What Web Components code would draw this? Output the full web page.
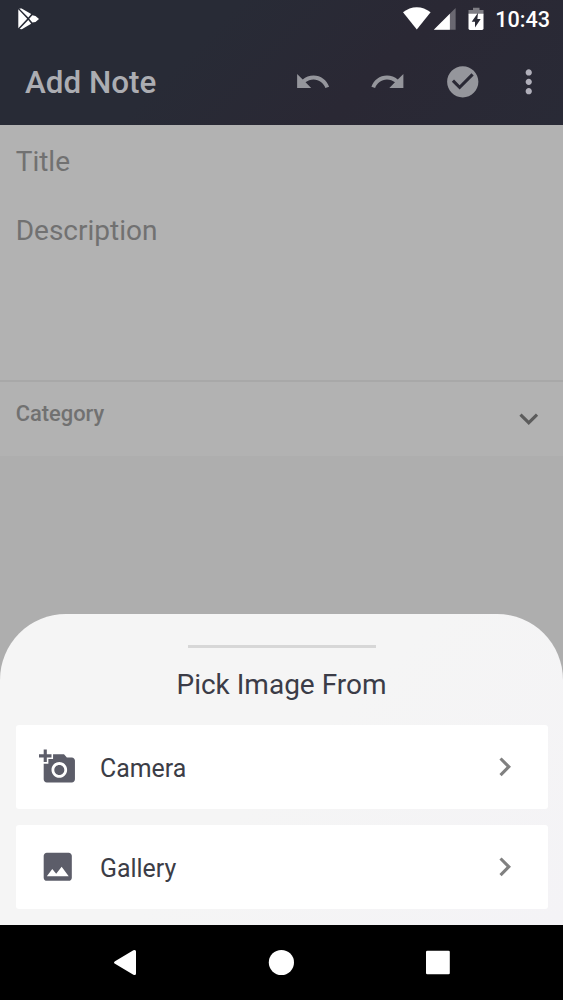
<!DOCTYPE html>
<html lang="en"><head><meta charset="utf-8"><title>Add Note</title>
<style>
html,body{margin:0;height:100%;overflow:hidden;font-family:Roboto,"Liberation Sans",sans-serif;background:#aeaeae}
</style></head><body>
<note-screen></note-screen>
<script>
const ICONS={
undo:'<path d="M12.5 8c-2.65 0-5.05.99-6.9 2.6L2 7v9h9l-3.62-3.62c1.39-1.16 3.16-1.88 5.12-1.88 3.54 0 6.55 2.31 7.6 5.5l2.37-.78C21.08 11.03 17.15 8 12.5 8z"/>',
redo:'<path d="M18.4 10.6C16.55 8.99 14.15 8 11.5 8c-4.65 0-8.58 3.03-9.96 7.22L3.9 16c1.05-3.19 4.05-5.5 7.6-5.5 1.95 0 3.73.72 5.12 1.88L13 16h9V7l-3.6 3.6z"/>',
check:'<path d="M12 2C6.48 2 2 6.48 2 12s4.48 10 10 10 10-4.48 10-10S17.52 2 12 2zm-2 15l-5-5 1.41-1.41L10 14.17l7.59-7.59L19 8l-9 9z"/>',
more:'<path d="M12 8c1.1 0 2-.9 2-2s-.9-2-2-2-2 .9-2 2 .9 2 2 2zm0 2c-1.1 0-2 .9-2 2s.9 2 2 2 2-.9 2-2-.9-2-2-2zm0 6c-1.1 0-2 .9-2 2s.9 2 2 2 2-.9 2-2-.9-2-2-2z"/>',
down:'<path d="M16.59 8.59L12 13.17 7.41 8.59 6 10l6 6 6-6z"/>',
right:'<path d="M10 6L8.59 7.41 13.17 12l-4.58 4.59L10 18l6-6z"/>',
camera:'<path d="M3 4V1h2v3h3v2H5v3H3V6H0V4h3zm3 6V7h3V4h7l1.83 2H21c1.1 0 2 .9 2 2v12c0 1.1-.9 2-2 2H5c-1.1 0-2-.9-2-2V10h3zm7 9c2.76 0 5-2.24 5-5s-2.24-5-5-5-5 2.24-5 5 2.24 5 5 5zm-3.2-5c0 1.77 1.43 3.2 3.2 3.2s3.2-1.43 3.2-3.2-1.43-3.2-3.2-3.2-3.2 1.43-3.2 3.2z"/>',
image:'<path d="M21 19V5c0-1.1-.9-2-2-2H5c-1.1 0-2 .9-2 2v14c0 1.1.9 2 2 2h14c1.1 0 2-.9 2-2zM8.5 13.5l2.5 3.01L14.5 12l4.5 6H5l3.5-4.5z"/>'};
const define=(name,html)=>customElements.define(name,class extends HTMLElement{
  constructor(){super();this.attachShadow({mode:'open'})}
  connectedCallback(){const t=document.createElement('template');t.innerHTML=typeof html==='function'?html(this):html;this.shadowRoot.replaceChildren(t.content.cloneNode(true))}
});
define('md-icon',el=>`<style>:host{display:block;width:37.5px;height:37.5px;flex:none}svg{display:block;width:100%;height:100%;fill:currentColor}</style><svg viewBox="0 0 24 24">${ICONS[el.getAttribute('name')]}</svg>`);
define('status-bar',`<style>
:host{display:flex;height:38px;color:#fff;box-sizing:border-box;padding:0 13px 0 18px;align-items:flex-start;justify-content:space-between}
.r{display:flex}svg{display:block;fill:#fff}
.time{font-weight:500;font-size:21.6px;line-height:24px;margin:8px 0 0 11px;white-space:nowrap}
</style>
<svg width="22" height="38" viewBox="0 0 22 38"><path d="M.3 9.2L9.2 18.7.3 28.2zM1.3 8.5L3.6 8.4 13.2 13.9 10.3 17.5zM1.6 28.9L10.3 20 13.2 23.8 3.8 29.2zM11.2 18.8L14.4 15.3 17.5 15.9 21 18.9 17.5 21.9 14.4 22.5z"/></svg>
<div class="r"><svg width="81" height="38" viewBox="403 0 81 38"><path d="M403 12.3C411 5.4 422.5 5.4 430.6 12.3L416.8 29.4z"/><path d="M455.6 8V29.7H433.8z" opacity=".3"/><path d="M449.9 13.7V29.7H433.8z"/><path opacity=".4" d="M473 7.7h6.5v2.2h4V14.5h-15V9.9h4.5z"/><path d="M468.5 13.8h15V28.6q0 1.4-1.4 1.4h-12.2q-1.4 0-1.4-1.4z"/><path fill="#292a35" d="M478 12.8L471.7 21.7H475V27.6L480.7 19H477.4z"/></svg><div class="time"><slot></slot></div></div>`);
define('app-bar',`<style>
:host{display:flex;height:87px;box-sizing:border-box;padding:0 15.7px 0 25px;align-items:center;color:#acadb2}
.title{font-size:31.4px;font-weight:500;line-height:40px;flex:1;white-space:nowrap;padding-top:2px}
.actions{display:flex;gap:37.5px;color:#95969c}md-icon:last-child{margin-left:-9.3px;color:#b0afba}
</style><div class="title"><slot></slot></div><div class="actions"><md-icon name="undo"></md-icon><md-icon name="redo"></md-icon><md-icon name="check"></md-icon><md-icon name="more"></md-icon></div>`);
define('note-form',`<style>
:host{display:block;height:331px;background:#b2b2b2;color:#717171}
.fields{height:255px;box-sizing:border-box;padding:17px 15.7px 0;font-size:28px;line-height:40px}
.fields div+div{margin-top:29px}
.category{height:76px;box-sizing:border-box;border-top:2px solid #a8a8a8;display:flex;justify-content:space-between;padding:17px 15.5px 0 15.7px;font-size:21.9px;font-weight:500;line-height:30px}
md-icon{margin-top:1px;color:#5c5c5c}
</style><div class="fields"><div>Title</div><div>Description</div></div><div class="category"><span>Category</span><md-icon name="down"></md-icon></div>`);
define('pick-option',el=>`<style>
:host{display:flex;height:84px;box-sizing:border-box;background:#fff;border-radius:3px;align-items:center;padding:0 24.7px 0 23.3px;color:#3c3d46}
span{flex:1;margin-left:23.2px;font-size:24.9px;line-height:34px;padding-top:3px}
.lead{color:#5c5d69}.go{color:#808080}
</style><md-icon class="lead" name="${el.getAttribute('icon')}"></md-icon><span><slot></slot></span><md-icon class="go" name="right"></md-icon>`);
define('bottom-sheet',`<style>
:host{display:flex;flex-direction:column;height:311.5px;box-sizing:border-box;padding:31px 15px 0 16px;border-radius:66px 66px 0 0;background:linear-gradient(135deg,#f5f5f5 50%,#f4f3f6)}
.handle{width:188px;height:3px;background:#d7d7d7;align-self:center}
h2{margin:17.5px 1px 0 0;font-size:28px;font-weight:400;line-height:40px;text-align:center;color:#3b3c47}
.list{display:grid;gap:16px;margin-top:20px}
</style><div class="handle"></div><h2>Pick Image From</h2><div class="list"><slot></slot></div>`);
define('nav-bar',`<style>
:host{display:flex;justify-content:center;height:75px;background:#000}svg{display:block}
</style><svg width="563" height="75" viewBox="0 925 563 75" fill="#fff"><path d="M115 961.2L133.4 950.2Q136 949.3 136 951.5V973.5Q136 975.7 133.4 974.8L115 963.7Q113 962.5 115 961.2z"/><circle cx="281.4" cy="962.5" r="12.6"/><rect x="426" y="950.7" width="23.8" height="23.5" rx="1.3"/></svg>`);
define('note-screen',`<style>
:host{display:flex;flex-direction:column;width:563px;height:1000px;background:#aeaeae;overflow:hidden}
.top{background:linear-gradient(135deg,#282b36 35%,#2a2834 65%,#292a36)}
.gap{flex:1}
</style><div class="top"><status-bar>10:43</status-bar><app-bar>Add Note</app-bar></div><note-form></note-form><div class="gap"></div><bottom-sheet><pick-option icon="camera">Camera</pick-option><pick-option icon="image">Gallery</pick-option></bottom-sheet><nav-bar></nav-bar>`);
</script></body></html>
